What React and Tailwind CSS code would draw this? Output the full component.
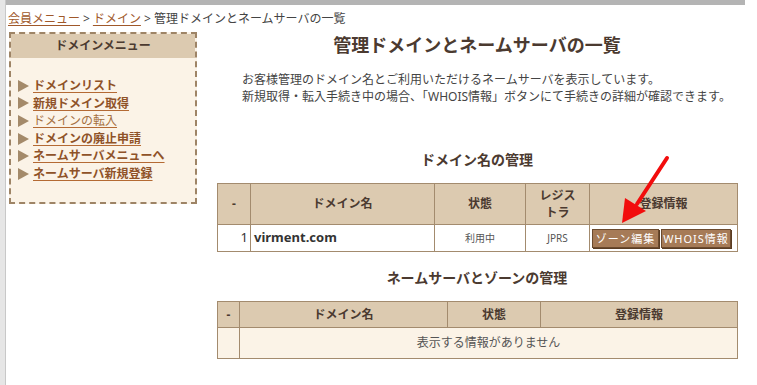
const font = { fontFamily: '"Noto Sans", "Noto Sans CJK JP", sans-serif' };

const menu = [
  { label: "ドメインリスト", bold: true },
  { label: "新規ドメイン取得", bold: true },
  { label: "ドメインの転入", bold: false },
  { label: "ドメインの廃止申請", bold: true },
  { label: "ネームサーバメニューへ", bold: true },
  { label: "ネームサーバ新規登録", bold: true },
];

const Tri = () => (
  <svg width="11" height="12" viewBox="0 0 11 12" className="shrink-0">
    <polygon points="0,0 11,6 0,12" fill="#a48a6a" />
  </svg>
);

const Btn = ({ w, children }) => (
  <button
    className={`${w} h-[19px] px-0 whitespace-nowrap bg-[#a67b57] border border-[#6b4a2e] shadow-[1px_1px_0_#5a3c22] text-white text-[11px] leading-[17px] tracking-[1px]`}
  >
    {children}
  </button>
);

const Sidebar = () => (
  <div className="w-[188px] ml-[3px] border-2 border-dashed border-[#9e8466] bg-[#fbf3e7] self-start">
    <div className="h-[24px] bg-[#dccab0] flex items-center justify-center text-[12px] font-bold text-[#4b3a30]">
      ドメインメニュー
    </div>
    <ul className="pt-[19px] pb-[19px] pl-[7px]">
      {menu.map((m) => (
        <li key={m.label} className="flex items-center gap-[4px] h-[17.6px]">
          <Tri />
          <a
            href="#"
            className={`text-[12px] leading-[17.6px] underline underline-offset-2 decoration-[#b46a34] ${
              m.bold ? "font-bold text-[#8f5228]" : "text-[#a5703f]"
            }`}
          >
            {m.label}
          </a>
        </li>
      ))}
    </ul>
  </div>
);

const th = "bg-[#dccab0] border border-[#a38b6e] text-[12px] font-bold text-[#4b3a30] text-center";
const td = "border border-[#a38b6e]";

const Arrow = () => (
  <svg className="absolute left-0 top-0 pointer-events-none" width="757" height="385">
    <line x1="667" y1="158" x2="637" y2="204" stroke="#f20d0d" strokeWidth="4" strokeLinecap="round" />
    <polygon points="622,223 625,198 646,211" fill="#f20d0d" />
  </svg>
);

export default function App() {
  return (
    <div className="relative flex w-[757px] h-[385px] bg-white overflow-hidden text-[#444]" style={font}>
      <div className="w-[6px] bg-[#e6e6e6] border-r border-[#c8c8c8] shrink-0" />
      <div className="flex-1 flex flex-col">
        <div className="h-[5px] bg-[#b4b4b4] mr-[12px]" />
        <div className="h-[27px] flex items-center pl-[2px] text-[12px] text-[#444] gap-[3px]">
          <a href="#" className="text-[#a0582a] underline underline-offset-2">会員メニュー</a>
          <span>&gt;</span>
          <a href="#" className="text-[#a0582a] underline underline-offset-2">ドメイン</a>
          <span>&gt; 管理ドメインとネームサーバの一覧</span>
        </div>
        <div className="flex">
          <Sidebar />
          <div className="w-[520px] ml-[20px] flex flex-col">
            <h1 className="text-[18px] leading-[26px] font-bold text-[#4b3a30] text-center">
              管理ドメインとネームサーバの一覧
            </h1>
            <p className="mt-[13px] pl-[25px] text-[12px] leading-[17px] text-[#444]">
              お客様管理のドメイン名とご利用いただけるネームサーバを表示しています。
              <br />
              新規取得・転入手続き中の場合、「WHOIS情報」ボタンにて手続きの詳細が確認できます。
            </p>
            <h2 className="mt-[45px] text-[14px] leading-[20px] font-bold text-[#4b3a30] text-center">
              ドメイン名の管理
            </h2>
            <table className="mt-[13px] w-[520px] table-fixed border-collapse">
              <colgroup>
                <col className="w-[33px]" />
                <col className="w-[184px]" />
                <col className="w-[91px]" />
                <col className="w-[64px]" />
                <col className="w-[148px]" />
              </colgroup>
              <thead>
                <tr className="h-[41px]">
                  <th className={th}>-</th>
                  <th className={th}>ドメイン名</th>
                  <th className={th}>状態</th>
                  <th className={`${th} leading-[17px]`}>
                    レジス
                    <br />
                    トラ
                  </th>
                  <th className={th}>登録情報</th>
                </tr>
              </thead>
              <tbody>
                <tr className="h-[27px] bg-white">
                  <td className={`${td} text-right pr-[2px] text-[13px] text-[#333]`}>1</td>
                  <td className={`${td} pl-[3px] text-[13px] font-bold text-[#333]`}>virment.com</td>
                  <td className={`${td} text-center text-[10px] text-[#555]`}>利用中</td>
                  <td className={`${td} text-center text-[10px] text-[#555]`}>JPRS</td>
                  <td className={`${td} pl-[2px]`}>
                    <div className="flex gap-[2px]">
                      <Btn w="w-[67px]">ゾーン編集</Btn>
                      <Btn w="w-[70px]">WHOIS情報</Btn>
                    </div>
                  </td>
                </tr>
              </tbody>
            </table>
            <h2 className="mt-[16px] text-[14px] leading-[20px] font-bold text-[#4b3a30] text-center">
              ネームサーバとゾーンの管理
            </h2>
            <table className="mt-[13px] w-[520px] table-fixed border-collapse">
              <colgroup>
                <col className="w-[22px]" />
                <col className="w-[208px]" />
                <col className="w-[93px]" />
                <col className="w-[197px]" />
              </colgroup>
              <thead>
                <tr className="h-[26px]">
                  <th className={th}>-</th>
                  <th className={th}>ドメイン名</th>
                  <th className={th}>状態</th>
                  <th className={th}>登録情報</th>
                </tr>
              </thead>
              <tbody>
                <tr className="h-[31px] bg-[#fbf3e7]">
                  <td className={td}></td>
                  <td colSpan={3} className={`${td} text-center text-[12px] text-[#555]`}>
                    表示する情報がありません
                  </td>
                </tr>
              </tbody>
            </table>
          </div>
        </div>
      </div>
      <Arrow />
    </div>
  );
}
